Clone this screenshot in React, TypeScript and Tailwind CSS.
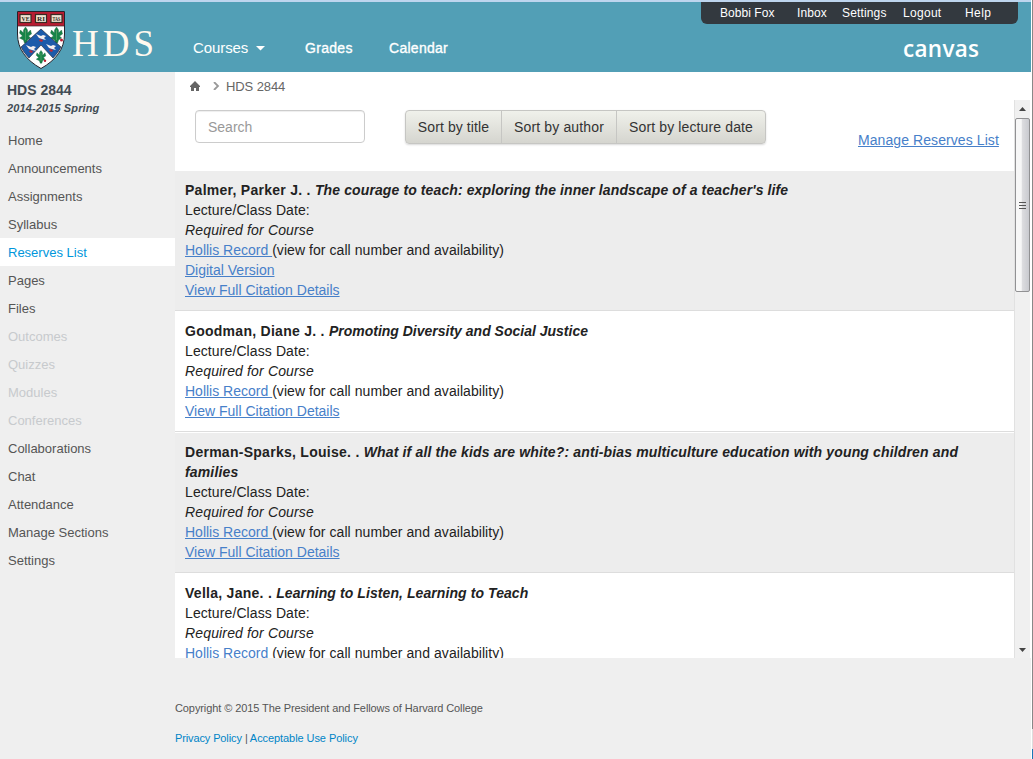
import type { ReactNode } from "react";

const navItems = [
  "Home", "Announcements", "Assignments", "Syllabus", "Reserves List", "Pages", "Files",
  "Outcomes", "Quizzes", "Modules", "Conferences", "Collaborations", "Chat", "Attendance",
  "Manage Sections", "Settings",
];
const disabled = ["Outcomes", "Quizzes", "Modules", "Conferences"];

function Link({ children, className = "" }: { children: ReactNode; className?: string }) {
  return <a href="#" className={`text-[#4780c9] underline ${className}`}>{children}</a>;
}

function Leaf({ x, y }: { x: number; y: number }) {
  return (
    <g transform={`translate(${x} ${y})`}>
      <path d="M0-7L2-4V-1L5-4L6 0L3 2L5 4L2 6L1 9L-1 9L-2 6L-6 4L-3 2L-6-1L-5-4L-2-1V-4Z" fill="#168447" stroke="#165d3b" strokeWidth=".4" />
      <circle cx="5" cy="6" r="1.5" fill="#b81d32" />
      <path d="M0-4V6" stroke="#74ab77" strokeWidth=".6" />
    </g>
  );
}

function Crest() {
  return (
    <svg width="50" height="60" viewBox="0 0 50 60" className="shrink-0">
      <path d="M1.5 1.5H48.5V24C48.5 39 40 50 25 58.5C10 50 1.5 39 1.5 24Z" fill="#fff" stroke="#25222b" />
      <path d="M2 2H48V16H2Z" fill="#b81d32" />
      <path d="M2 16H48" stroke="#382c31" strokeWidth=".7" />
      <Leaf x={9.5} y={24} />
      <Leaf x={40.5} y={24} />
      <path d="M25 19L45 37Q42 43 37 48L25 35L13 48Q8 43 5 37Z" fill="#1c5aaa" stroke="#282d40" strokeWidth=".7" />
      {[["VE", 9.5], ["RI", 25], ["TAS", 40.5]].map(([t, x]) => (
        <g key={t}>
          <rect x={Number(x) - 5.5} y="4.5" width="11" height="8" fill="#eee4d2" stroke="#392a22" strokeWidth="1.2" />
          <text x={Number(x) - 4} y="10.8" fontSize="6" fontWeight="700" textLength="8" lengthAdjust="spacingAndGlyphs" fill="#302820" fontFamily="Liberation Serif, serif">{t}</text>
        </g>
      ))}
      <g transform="translate(25 46) scale(.8)"><Leaf x={0} y={0} /></g>
      {[[25, 27], [15, 38], [35, 37]].map(([x, y]) => (
        <g key={`${x}-${y}`} transform={`translate(${x} ${y})`}>
          <path d="M-5-3L0-1L2-2L5-1L3 1L5 3L1 2L-2 1Z" fill="#f5eeee" />
          <path d="M-1 2L2 3L1 5L-2 4Z" fill="#b92b3b" />
        </g>
      ))}
    </svg>
  );
}

function Record({ author, title, titleClass, digital = false, shaded = false, className }: {
  author: string; title: string; titleClass: string; digital?: boolean; shaded?: boolean; className: string;
}) {
  return (
    <article className={`${className} shrink-0 border-b border-[#ddd] px-[10px] pt-[9px] text-[14px] leading-[20px] text-[#222] ${shaded ? "bg-[#ededed]" : "bg-white"}`}>
      <h2 className="font-bold"><span className="tracking-[0.27px]">{author} . </span><em className={titleClass}>{title}</em></h2>
      <p className="tracking-[0.1px]">Lecture/Class Date:</p>
      <p className="tracking-[0.15px] italic">Required for Course</p>
      <p><Link>Hollis Record </Link><span className="tracking-[0.06px]">(view for call number and availability)</span></p>
      {digital && <p><Link>Digital Version</Link></p>}
      <p><Link>View Full Citation Details</Link></p>
    </article>
  );
}

export default function App() {
  return (
    <div className="flex h-[759px] w-[1033px] overflow-hidden bg-[#efefef] font-['Liberation_Sans',Arial,sans-serif] text-[#555]">
      <div className="flex w-[1031px] flex-col">
        <header className="flex h-[72px] shrink-0 border-t-2 border-[#bed5ee] bg-[#529fb6] text-white">
          <div className="flex w-[175px] shrink-0 pl-4 pt-[8px]">
            <Crest />
            <svg width="100" height="58" className="ml-[6px] shrink-0">
              <text x="0" y="46" textLength="82" fontSize="37" fontFamily="Liberation Serif, serif" fill="#fff9ef">HDS</text>
            </svg>
          </div>
          <nav className="flex w-[525px] pl-[18px] pt-[36px] text-[14px] leading-[20px]">
            <a href="#" className="flex w-[112px] text-[15px] tracking-[-0.08px]">Courses<svg width="9" height="5" className="ml-[8px] mt-[8px]"><path d="M0 0H9L4.5 4.5Z" fill="white" /></svg></a>
            <a href="#" className="w-[84px] tracking-[0.3px] [-webkit-text-stroke:0.35px_white]">Grades</a>
            <a href="#" className="tracking-[0.28px] [-webkit-text-stroke:0.35px_white]">Calendar</a>
          </nav>
          <div className="flex flex-col">
            <nav className="ml-px flex h-[22px] w-[317px] rounded-b-[6px] bg-[#33393f] pl-[19px] pt-[1px] text-[12px] leading-[20px]">
              <a href="#" className="w-[77px] tracking-[0.05px]">Bobbi Fox</a>
              <a href="#" className="w-[45px] tracking-[0.1px]">Inbox</a>
              <a href="#" className="w-[61px] tracking-[0.15px]">Settings</a>
              <a href="#" className="w-[62px] tracking-[0.3px]">Logout</a>
              <a href="#" className="tracking-[0.4px]">Help</a>
            </nav>
            <svg width="90" height="44" className="ml-[203px]"><text x="0" y="33" textLength="76" lengthAdjust="spacing" fontFamily="Open Sans, sans-serif" fontSize="22.5" fontWeight="600" fill="white">canvas</text></svg>
          </div>
        </header>
        <div className="flex h-[586px] shrink-0">
          <aside className="w-[175px] shrink-0 bg-[#efefef]">
            <h1 className="h-[26px] pl-[7px] pt-[9px] text-[14px] font-bold leading-[19px] text-[#414b53]">HDS 2844</h1>
            <p className="h-[28px] pl-[7px] text-[11px] font-bold italic leading-[20px] tracking-[0.12px] text-[#414b53]">2014-2015 Spring</p>
            <nav>
              {navItems.map((item) => (
                <a key={item} href="#" className={`flex h-7 items-center pl-2 pt-[2px] text-[13px] ${item === "Reserves List" ? "bg-white text-[#0096db]" : disabled.includes(item) ? "text-[#c7cacd]" : "text-[#555]"}`}>{item}</a>
              ))}
            </nav>
          </aside>
          <main className="flex w-[856px] flex-col bg-white">
            <div className="flex h-[28px] shrink-0 items-center pl-[15px] text-[13px] text-[#666]">
              <svg width="10" height="10"><path d="M0 5L5 0L10 5V6H9V10H6V7H4V10H1V6H0Z" fill="#666" /></svg>
              <svg width="7" height="8" className="ml-[13px] mr-[6px]"><path d="M1 0L5 4L1 8" fill="none" stroke="#999" strokeWidth="1.8" /></svg>
              <span className="pt-px tracking-[-0.1px]">HDS 2844</span>
            </div>
            <div className="flex h-[558px]">
              <section className="flex w-[839px] flex-col overflow-hidden">
                <div className="flex h-[71px] shrink-0 pl-5 pt-[10px] text-[14px]">
                  <input aria-label="Search" placeholder="Search" className="h-[33px] w-[170px] rounded-[4px] border border-[#ccc] px-3 pt-px shadow-[inset_0_1px_1px_rgba(0,0,0,0.07)] outline-none placeholder:text-[#999]" />
                  <div className="ml-10 flex h-[34px] w-[361px] overflow-hidden rounded-[4px] border border-[#c6c6c3] bg-linear-to-b from-[#f0f1eb] to-[#d5d5cf] text-[#333] shadow-[0_1px_2px_rgba(0,0,0,0.15)] [text-shadow:0_1px_0_white]">
                    <button className="w-[96px] border-r border-[#c6c6c3] tracking-[0.1px]">Sort by title</button>
                    <button className="w-[115px] border-r border-[#c6c6c3] tracking-[0.14px]">Sort by author</button>
                    <button className="flex-1 tracking-[0.13px]">Sort by lecture date</button>
                  </div>
                  <div className="ml-[92px] whitespace-nowrap pt-5"><Link className="tracking-[0.08px]">Manage Reserves List</Link></div>
                </div>
                <Record className="h-[140px]" titleClass="tracking-[0.11px]" shaded digital author="Palmer, Parker J." title="The courage to teach: exploring the inner landscape of a teacher's life" />
                <Record className="mt-px h-[120px]" titleClass="tracking-normal" author="Goodman, Diane J." title="Promoting Diversity and Social Justice" />
                <Record className="mt-px h-[140px]" titleClass="tracking-[0.15px]" shaded author="Derman-Sparks, Louise." title="What if all the kids are white?: anti-bias multiculture education with young children and families" />
                <Record className="mt-px h-[140px]" titleClass="tracking-[0.08px]" author="Vella, Jane." title="Learning to Listen, Learning to Teach" />
              </section>
              <div className="flex w-4 flex-col items-center border-l border-[#e1e1e1] bg-[#f0f0f0]">
                <svg width="15" height="18"><path d="M4 11L7.5 7L11 11Z" fill="#444" /></svg>
                <div className="flex h-[174px] w-[15px] flex-col items-center justify-center gap-[2px] rounded-[2px] border border-[#919193] bg-linear-to-r from-[#f7f7f7] from-40% via-[#dcdcdf] via-50% to-[#c9cacf]">
                  <span className="h-px w-[7px] bg-[#555]" /><span className="h-px w-[7px] bg-[#555]" /><span className="h-px w-[7px] bg-[#555]" />
                </div>
                <svg width="15" height="18" className="mt-auto"><path d="M4 8L7.5 12L11 8Z" fill="#444" /></svg>
              </div>
            </div>
          </main>
        </div>
        <footer className="h-[101px] pl-[175px] pt-[40px] text-[11px] leading-[20px]">
          <div className="h-[30px] tracking-[-0.095px]">Copyright © 2015 The President and Fellows of Harvard College</div>
          <div className="flex text-[#0085c7]"><a href="#" className="w-[70px] tracking-[-0.12px]">Privacy Policy</a><span className="text-[#555]">|</span><a href="#" className="ml-[2px] tracking-[-0.07px]">Acceptable Use Policy</a></div>
        </footer>
      </div>
      <div className="flex w-[2px] flex-col border-l border-white"><div className="h-[729px] bg-[#888]" /><div className="h-5 bg-[#ddd]" /><div className="h-[10px] bg-[#1978b6]" /></div>
    </div>
  );
}
